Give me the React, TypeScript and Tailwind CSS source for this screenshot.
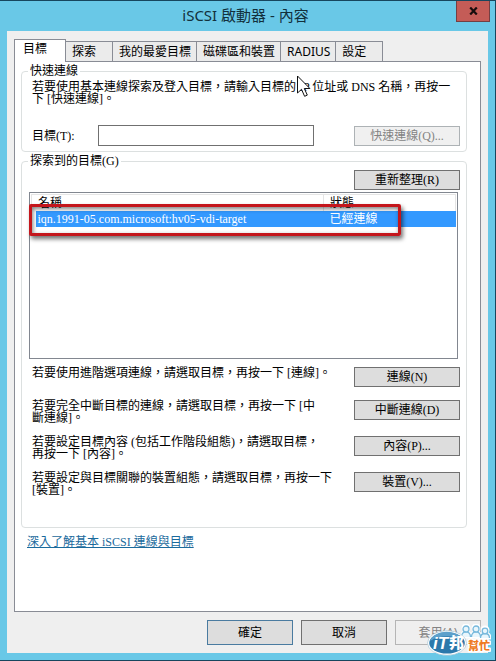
import { useState } from "react";

const TABS = ["目標", "探索", "我的最愛目標", "磁碟區和裝置", "RADIUS", "設定"];

interface Target {
  name: string;
  status: string;
}

const TARGETS: Target[] = [{ name: "iqn.1991-05.com.microsoft:hv05-vdi-target", status: "已經連線" }];

const ACTIONS = [
  { text: "若要使用進階選項連線，請選取目標，再按一下 [連線]。", button: "連線(N)", width: "max-w-[302px]" },
  { text: "若要完全中斷目標的連線，請選取目標，再按一下 [中斷連線]。", button: "中斷連線(D)", width: "max-w-[290px]" },
  { text: "若要設定目標內容 (包括工作階段組態)，請選取目標，再按一下 [內容]。", button: "內容(P)...", width: "max-w-[290px]" },
  { text: "若要設定與目標關聯的裝置組態，請選取目標，再按一下 [裝置]。", button: "裝置(V)...", width: "max-w-[302px]" },
];

function SmallButton({ label, disabled }: { label: string; disabled?: boolean }) {
  return (
    <button type="button" disabled={disabled}
      className="w-[106px] h-5 shrink-0 border border-[#707070] bg-[#dddddd] leading-4 text-black disabled:border-[#adb2b5] disabled:bg-[#f0f0f0] disabled:text-[#838383]">
      {label}
    </button>
  );
}

function Cursor() {
  return (
    <svg className="absolute left-[297px] top-[74px] w-3.5 h-[22px] pointer-events-none" viewBox="0 0 14 22">
      <path d="M.5 1v17l4-3.700 3.100 7 2.700-1.200-3-6.600h5.600z" fill="#fff" stroke="#111" strokeWidth="1" />
    </svg>
  );
}

function Watermark() {
  return (
    <svg className="absolute right-1 bottom-1 w-16 h-8 pointer-events-none" viewBox="0 0 64 32" aria-label="iT邦幫忙">
      {/* people */}
      <g fill="#fff" stroke="#fff" strokeWidth="3" strokeLinejoin="round">
        <circle cx="39" cy="4" r="3" /><path d="M34 13c0-7 10-7 10 0z" />
        <circle cx="49" cy="4" r="3" /><path d="M44 13c0-7 10-7 10 0z" />
        <circle cx="58" cy="6" r="3" /><path d="M53 14c0-7 10-7 10 0z" />
      </g>
      <g fill="#e9f6fc" stroke="#78b9dc" strokeWidth="1.300">
        <path d="M34.500 13c0-7 9-7 9 0" /><circle cx="39" cy="5" r="3" />
        <path d="M44.500 13c0-7 9-7 9 0" /><circle cx="49" cy="5" r="3" />
        <path d="M53.500 14c0-6 9-6 9 0" /><circle cx="58" cy="7" r="2.800" />
      </g>
      <ellipse cx="20" cy="19" rx="19.500" ry="12.300" fill="#fff" stroke="#9cbdd0" strokeWidth=".6" />
      <ellipse cx="20" cy="19" rx="17.800" ry="10.600" fill="#2b78ab" />
      <path d="M3 17C8 5 30 5 37 16 26 11 13 11 3 17z" fill="#5da0cb" />
      <text x="6" y="25" fontSize="17" fontWeight="900" fontStyle="italic" fill="#fff" fontFamily="Liberation Sans, sans-serif">iT</text>
      <text x="22" y="24" fontSize="15" fontWeight="900" fill="#fff" fontFamily="Noto Sans CJK TC, sans-serif">邦</text>
      <text x="41" y="26" fontSize="11" fontWeight="900" fill="#ee7a22" stroke="#fff" strokeWidth="3" strokeLinejoin="round" paintOrder="stroke" fontFamily="Noto Sans CJK TC, sans-serif">幫忙</text>
    </svg>
  );
}

export default function App() {
  const [tab, setTab] = useState(0);
  const [target, setTarget] = useState("");

  return (
    <div lang="zh-TW" className="relative flex min-h-screen flex-col border-y border-r border-[#17465e] bg-[#69c8e7] pr-[7px] pb-[7px] pl-[7px] font-['Noto_Sans','Noto_Sans_CJK_TC',sans-serif] text-xs text-black">
      {/* Title bar */}
      <header className="flex h-[30px] items-start">
        <span className="w-7 shrink-0" />
        <h1 className="flex-1 text-center text-[15px] leading-7 text-[#12303c]">iSCSI 啟動器 - 內容</h1>
        <button type="button" aria-label="關閉" className="-mr-0.5 flex h-[21px] w-[34px] items-center justify-center border border-t-0 border-[#743f43] bg-[#c45c57]">
          <svg className="h-2 w-[9px]" viewBox="0 0 9 8">
            <path d="M1.200.5l6.600 7M7.800.5l-6.600 7" stroke="#160c0c" strokeWidth="2.200" />
          </svg>
        </button>
      </header>

      <main className="flex flex-1 flex-col bg-[#efefef] px-[7px] pt-2">
        {/* Tabs */}
        <div role="tablist" className="flex h-[22px] items-end">
          {TABS.map((t, i) => (
            <button key={t} type="button" role="tab" aria-selected={tab === i} onClick={() => setTab(i)}
              className={tab === i
                ? "relative z-10 -mb-px h-[23px] min-w-[52px] border border-b-0 border-[#898c95] bg-white px-2 pb-1 text-left leading-4"
                : "-ml-px h-5 min-w-12 border border-b-0 border-[#898c95] bg-[#ebebeb] pr-[5px] pl-1.5 text-left leading-4"}>
              {t}
            </button>
          ))}
        </div>

        <div role="tabpanel" className="flex-1 border border-[#898c95] bg-white px-1.5 pt-px font-['Liberation_Serif','Noto_Sans_CJK_TC',serif]">
          {/* Quick connect */}
          <fieldset className="mr-[7px] rounded border border-[#dce0e0] pr-1.5 pb-[5px] pl-2.5">
            <legend className="-ml-1 px-0.5 leading-4">快速連線</legend>
            <p className="pt-0.5 leading-3">若要使用基本連線探索及登入目標，請輸入目標的 IP 位址或 DNS 名稱，再按一下 [快速連線]。</p>
            <div className="mt-5 flex items-center">
              <label htmlFor="target" className="w-[66px] shrink-0">目標(T):</label>
              <input id="target" type="text" value={target} onChange={(e) => setTarget(e.target.value)}
                className="mr-10 h-[21px] min-w-0 flex-1 border border-[#707070] bg-white px-1 outline-none" />
              <SmallButton label="快速連線(Q)..." disabled />
            </div>
          </fieldset>

          {/* Discovered targets */}
          <fieldset className="mt-px mr-[7px] rounded border border-[#dce0e0] pr-1.5 pb-[31px] pl-2.5">
            <legend className="-ml-1 px-0.5 leading-4">探索到的目標(G)</legend>
            <div className="flex justify-end pt-px">
              <SmallButton label="重新整理(R)" />
            </div>

            <div className="relative mt-0.5 mr-0.5 -ml-[3px] h-[167px] border border-[#828790] bg-white px-px pt-px">
              <table className="w-full table-fixed border-collapse text-left">
                <thead>
                  <tr className="h-4 border-t border-l border-[#e5e5e5] leading-4">
                    <th className="p-0 pl-1.5 font-normal">名稱</th>
                    <th className="w-[132px] border-x border-[#e5e5e5] p-0 pl-1.5 font-normal">狀態</th>
                  </tr>
                </thead>
                <tbody>
                  {TARGETS.map((t) => (
                    <tr key={t.name} className="leading-4 text-white">
                      <td className="p-0 pl-1"><div className="bg-[#3399ff] pl-0.5">{t.name}</div></td>
                      <td className="bg-[#3399ff] p-0 pl-1.5">{t.status}</td>
                    </tr>
                  ))}
                </tbody>
              </table>
              {/* Highlight frame */}
              <div className="pointer-events-none absolute top-[11px] right-14 -left-px h-8 rounded-xs border-3 border-[#c4161c] shadow-[2px_3px_4px_rgba(0,0,0,0.55),inset_1px_2px_4px_rgba(0,0,0,0.5)]" />
            </div>

            <div className="mt-2 space-y-3">
              {ACTIONS.map((a) => (
                <div key={a.button} className="flex min-h-[21px] items-start justify-between">
                  <p className={`${a.width} leading-3`}>{a.text}</p>
                  <SmallButton label={a.button} />
                </div>
              ))}
            </div>
          </fieldset>

          <a href="#learn" className="mt-1.5 ml-1.5 inline-block leading-4 text-[#1a6a9c] underline">深入了解基本 iSCSI 連線與目標</a>
        </div>

        {/* Dialog buttons */}
        <div className="flex justify-end gap-2 pt-2 pb-2">
          <button type="button" className="h-[25px] w-[86px] border border-[#4a7ba0] bg-[#dddddd]">確定</button>
          <button type="button" className="h-[25px] w-[86px] border border-[#707070] bg-[#dddddd]">取消</button>
          <button type="button" disabled className="h-[25px] w-[86px] border border-[#b5b5b5] bg-[#efefef] text-[#838383]">套用(A)</button>
        </div>
      </main>

      <Cursor />
      <Watermark />
    </div>
  );
}
